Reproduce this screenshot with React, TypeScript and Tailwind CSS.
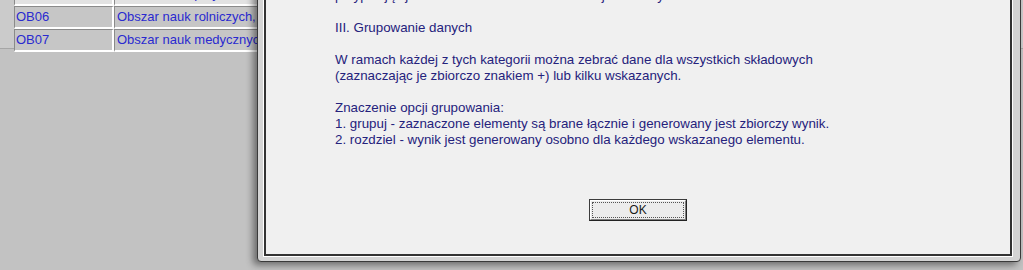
import React from 'react';

const rows = [
  { code: 'OB05', name: 'Obszar nauk przyrodniczych', light: true },
  { code: 'OB06', name: 'Obszar nauk rolniczych, leśnych i weterynaryjnych' },
  { code: 'OB07', name: 'Obszar nauk medycznych i nauk o zdrowiu oraz nauk o kulturze fizycznej' },
];

const lines = [
  'przypisując je razem do obszarów nauk danej dziedziny.',
  '',
  'III. Grupowanie danych',
  '',
  'W ramach każdej z tych kategorii można zebrać dane dla wszystkich składowych',
  '(zaznaczając je zbiorczo znakiem +) lub kilku wskazanych.',
  '',
  'Znaczenie opcji grupowania:',
  '1. grupuj - zaznaczone elementy są brane łącznie i generowany jest zbiorczy wynik.',
  '2. rozdziel - wynik jest generowany osobno dla każdego wskazanego elementu.',
];

const App: React.FC = () => {
  return (
    <div className="relative w-[1023px] h-[270px] overflow-hidden bg-[#c2c2c2] font-['Liberation_Sans',Arial,sans-serif]">
      {/* List behind the dialog */}
      <div className="h-[66px] bg-[#cbcbcb] border-b border-[#a6a6a6] pl-[14px]">
        <div className="flex flex-col -mt-[17px]">
          {rows.map((row) => (
            <div key={row.code} className="flex">
              <div
                className={`w-[100px] h-[23px] border-t border-l border-t-[#8a8a8a] border-l-[#8a8a8a] border-b-2 border-r-2 border-b-white border-r-white pl-[1px] text-[13px] leading-[20px] text-[#2a2ad0] ${
                  row.light ? 'bg-[#e2e2e2]' : 'bg-[#c6c6c6]'
                }`}
              >
                {row.code}
              </div>
              <div
                className={`w-[560px] h-[23px] border-t border-l border-t-[#8a8a8a] border-l-[#8a8a8a] border-b-2 border-b-white pl-[2px] text-[13px] leading-[20px] text-[#2a2ad0] whitespace-nowrap overflow-hidden ${
                  row.light ? 'bg-[#e2e2e2]' : 'bg-[#c6c6c6]'
                }`}
              >
                {row.name}
              </div>
            </div>
          ))}
        </div>
      </div>

      {/* Dialog window */}
      <div className="absolute left-[257px] top-[-240px] w-[764px] h-[502px] flex border border-[#3a3a3a] rounded-b-[4px] bg-[#d4d4d4] pl-[5px] pr-[7px] pb-[4px] shadow-[-4px_3px_7px_rgba(0,0,0,0.45)]">
        <div className="flex-1 flex border border-white">
          <div className="flex-1 flex flex-col justify-end border-2 border-[#333333] bg-[#f0f0f0] pb-[33px]">
            <div className="pl-[69px] text-[13.33px] leading-[16px] text-[#25227c] whitespace-nowrap">
              {lines.map((line, i) => (
                <div key={i} className="h-[16px]">
                  {line}
                </div>
              ))}
            </div>
            <div className="self-center mt-[51px] w-[98px] h-[22px] border border-[#3c3c3c] border-r-[#222222] border-b-[#222222] flex">
              <div className="flex-1 flex border border-t-white border-l-white border-r-[#808080] border-b-[#808080] bg-[#ececec] p-[1px]">
                <div className="flex-1 flex items-center justify-center border border-dotted border-[#555555] text-[12px] leading-none text-[#1a1a1a]">
                  OK
                </div>
              </div>
            </div>
          </div>
        </div>
      </div>
    </div>
  );
};

export default App;
